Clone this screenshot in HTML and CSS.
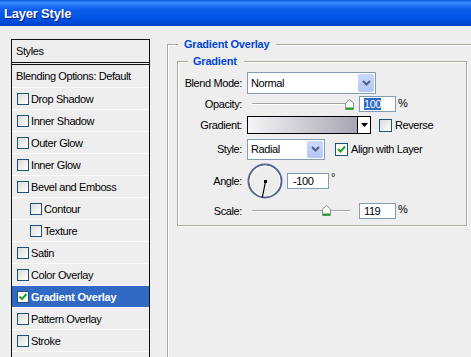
FILE: index.html
```html
<!DOCTYPE html>
<html>
<head>
<meta charset="utf-8">
<link rel="stylesheet" href="styles.css">
</head>
<body>
<div class="titlebar">Layer Style</div>
<div class="main">
  <div class="styles-panel">
    <div class="sp-head">Styles</div>
    <div class="sp-blend">Blending Options: Default</div>
    <div class="sp-row"><span class="cb"></span>Drop Shadow</div>
    <div class="sp-row"><span class="cb"></span>Inner Shadow</div>
    <div class="sp-row"><span class="cb"></span>Outer Glow</div>
    <div class="sp-row"><span class="cb"></span>Inner Glow</div>
    <div class="sp-row"><span class="cb"></span>Bevel and Emboss</div>
    <div class="sp-row sub"><span class="cb"></span>Contour</div>
    <div class="sp-row sub"><span class="cb"></span>Texture</div>
    <div class="sp-row"><span class="cb"></span>Satin</div>
    <div class="sp-row"><span class="cb"></span>Color Overlay</div>
    <div class="sp-row active"><span class="cb on"><svg width="10" height="10" viewBox="0 0 10 10"><path d="M1.5 4.5 L4 7 L8.5 2" fill="none" stroke="#21A121" stroke-width="2"/></svg></span>Gradient Overlay</div>
    <div class="sp-row"><span class="cb"></span>Pattern Overlay</div>
    <div class="sp-row"><span class="cb"></span>Stroke</div>
  </div>

  <fieldset class="group outer">
    <legend class="outer-legend">Gradient Overlay</legend>
    <fieldset class="group inner">
      <legend class="inner-legend">Gradient</legend>
      <div class="form">
        <div class="row r1">
          <span class="lbl">Blend Mode:</span>
          <div class="select blend"><span class="sel-text">Normal</span><span class="btn"><svg width="9" height="6" viewBox="0 0 9 6"><path d="M1 1 L4.5 4.5 L8 1" fill="none" stroke="#4D6185" stroke-width="2"/></svg></span></div>
        </div>
        <div class="row r2">
          <span class="lbl">Opacity:</span>
          <div class="slider"><div class="track"></div><svg class="thumb" style="left:98px" width="9" height="11" viewBox="0 0 9 11"><path d="M0.5 4 L4.5 0.5 L8.5 4 L8.5 10.5 L0.5 10.5 Z" fill="#F7F7F4" stroke="#8E8F8F"/><path d="M1 9.5 H8" stroke="#21A121" stroke-width="2"/></svg></div>
          <div class="num"><span class="hl">100</span></div>
          <span class="unit">%</span>
        </div>
        <div class="row r3">
          <span class="lbl">Gradient:</span>
          <div class="grad"><div class="grad-sw"></div><div class="grad-arrow"><svg width="7" height="4" viewBox="0 0 7 4"><path d="M0 0 H7 L3.5 4 Z" fill="#000"/></svg></div></div>
          <span class="cb big rev"></span><span class="cb-text">Reverse</span>
        </div>
        <div class="row r4">
          <span class="lbl">Style:</span>
          <div class="select style"><span class="sel-text">Radial</span><span class="btn"><svg width="9" height="6" viewBox="0 0 9 6"><path d="M1 1 L4.5 4.5 L8 1" fill="none" stroke="#4D6185" stroke-width="2"/></svg></span></div>
          <span class="cb big on align"><svg width="11" height="11" viewBox="0 0 11 11"><path d="M2 5 L4.5 7.5 L9 2.5" fill="none" stroke="#21A121" stroke-width="2"/></svg></span><span class="cb-text">Align with Layer</span>
        </div>
        <div class="row r5">
          <span class="lbl">Angle:</span>
          <svg class="dial" width="36" height="36" viewBox="0 0 36 36">
            <circle cx="18" cy="18" r="16.5" fill="#EDEDEB" stroke="#56668F" stroke-width="2"/>
            <circle cx="18" cy="18" r="15" fill="none" stroke="#FFFFFF" stroke-width="1" opacity="0.8"/>
            <line x1="18.5" y1="18.5" x2="15.3" y2="34.5" stroke="#000" stroke-width="1.2"/>
            <rect x="17" y="17" width="3" height="3" fill="#000"/>
          </svg>
          <div class="num angle">-100</div>
          <span class="deg">°</span>
        </div>
        <div class="row r6">
          <span class="lbl">Scale:</span>
          <div class="slider"><div class="track"></div><svg class="thumb" style="left:75px" width="9" height="11" viewBox="0 0 9 11"><path d="M0.5 4 L4.5 0.5 L8.5 4 L8.5 10.5 L0.5 10.5 Z" fill="#F7F7F4" stroke="#8E8F8F"/><path d="M1 9.5 H8" stroke="#21A121" stroke-width="2"/></svg></div>
          <div class="num">119</div>
          <span class="unit">%</span>
        </div>
      </div>
    </fieldset>
  </fieldset>
</div>
</body>
</html>
```

FILE: styles.css
```css
html, body {
  margin: 0;
  height: 100%;
  overflow: hidden;
  background: #EEEEEE;
  font-family: "Liberation Sans", Arial, sans-serif;
  font-size: 11px;
  letter-spacing: -0.4px;
  color: #000;
}

.titlebar {
  height: 26px;
  box-sizing: border-box;
  padding: 1px 0 0 4px;
  line-height: 25px;
  font-size: 13px;
  font-weight: bold;
  letter-spacing: -0.2px;
  color: #fff;
  text-shadow: 1px 1px 0 #0A1E8C;
  background: linear-gradient(to bottom, #0A5BE0 0px, #3C8FFA 3px, #1E6FF5 6px, #0A5EEA 10px, #0055E5 18px, #0048D6 23px, #003FC4 26px);
}

.main {
  display: flex;
  align-items: flex-start;
  padding-left: 11px;
}

/* left list */
.styles-panel {
  flex: none;
  margin-top: 13px;
  width: 139px;
  height: 400px;
  box-sizing: border-box;
  border: 1px solid #111;
  overflow: hidden;
}
.sp-head {
  height: 22px;
  line-height: 22px;
  padding-left: 4px;
  border-bottom: 3px double #111;
}
.sp-blend {
  height: 22px;
  line-height: 22px;
  padding-left: 4px;
  border-bottom: 1px solid #FAFAFA;
}
.sp-row {
  height: 21px;
  display: flex;
  align-items: center;
  padding-left: 5px;
  border-bottom: 1px solid #FAFAFA;
}
.sp-row.sub { padding-left: 18px; }
.sp-row.active {
  background: #316AC5;
  color: #fff;
  font-weight: bold;
  letter-spacing: -0.2px;
}

.cb {
  flex: none;
  width: 12px;
  height: 12px;
  box-sizing: border-box;
  border: 1px solid #1C5180;
  background: linear-gradient(135deg, #DCDCD7, #FFFFFF);
  margin-right: 2px;
  display: flex;
  align-items: center;
  justify-content: center;
}
.cb.on { background: #fff; }
.cb.big { width: 13px; height: 13px; }

/* group boxes */
.group {
  margin: 0;
  padding: 0;
  min-width: 0;
  border: 1px solid #ACA899;
  box-shadow: inset 1px 1px 0 #fff, 1px 1px 0 #fff;
}
.group legend {
  font-weight: bold;
  color: #0046D5;
  line-height: 13px;
  letter-spacing: -0.2px;
  background: #EEEEEE;
}
.outer {
  flex: none;
  margin-left: 17px;
  margin-top: 12px;
  width: 360px;
  height: 400px;
  box-sizing: border-box;
}
.outer-legend {
  margin-left: 10px;
  padding: 0 7px 0 6px;
}
.inner {
  margin-left: 9px;
  margin-top: 4px;
  width: 290px;
  box-sizing: border-box;
}
.inner-legend {
  margin-left: 10px;
  padding: 0 7px 0 5px;
}

.form {
  padding: 4px 0 3px 0;
  display: flex;
  flex-direction: column;
}
.row {
  display: flex;
  align-items: center;
}
.r1 { height: 22px; }
.r2 { height: 20px; }
.r3 { height: 22px; }
.r4 { height: 26px; }
.r5 { height: 37px; }
.r6 { height: 23px; }

.lbl {
  flex: none;
  width: 64px;
  margin-right: 5px;
  text-align: right;
}

.select {
  flex: none;
  height: 22px;
  box-sizing: border-box;
  border: 1px solid #7F9DB9;
  background: #fff;
  display: flex;
  align-items: center;
  padding-left: 3px;
}
.select.blend { width: 129px; }
.select.style { width: 78px; height: 21px; }
.select .sel-text { flex: 1; }
.select .btn {
  flex: none;
  width: 16px;
  align-self: stretch;
  margin: 1px;
  border-radius: 2px;
  background: linear-gradient(to bottom, #CBD9FD, #B2C6F7);
  display: flex;
  align-items: center;
  justify-content: center;
}

.slider {
  flex: none;
  position: relative;
  width: 112px;
  height: 11px;
  display: flex;
  align-items: center;
}
.track {
  margin-left: 5px;
  width: 98px;
  height: 0;
  border-top: 1px solid #A3A3A3;
  border-bottom: 1px solid #FFFFFF;
}
.thumb {
  position: absolute;
  top: 0;
}

.num {
  flex: none;
  width: 37px;
  height: 16px;
  box-sizing: border-box;
  border: 1px solid #7F9DB9;
  background: #fff;
  padding-left: 4px;
  line-height: 14px;
}
.num .hl {
  background: #316AC5;
  color: #fff;
  display: inline-block;
  line-height: 12px;
}
.num.angle { width: 42px; margin-left: 4px; padding-left: 5px; }
.unit { margin-left: 2px; margin-bottom: 3px; }
.deg { margin-left: 2px; margin-bottom: 7px; }

.grad {
  flex: none;
  display: flex;
  height: 18px;
}
.grad-sw {
  width: 111px;
  box-sizing: border-box;
  border: 1px solid #000;
  background: linear-gradient(90deg, #F5F5F7, #A6A5B3);
}
.grad-arrow {
  width: 13px;
  box-sizing: border-box;
  border: 1px solid #000;
  border-left: none;
  background: #fff;
  display: flex;
  align-items: center;
  justify-content: center;
}
.rev { margin-left: 8px; }
.align { margin-left: 10px; }
.cb-text { margin-left: 1px; }
.dial { flex: none; }
```
